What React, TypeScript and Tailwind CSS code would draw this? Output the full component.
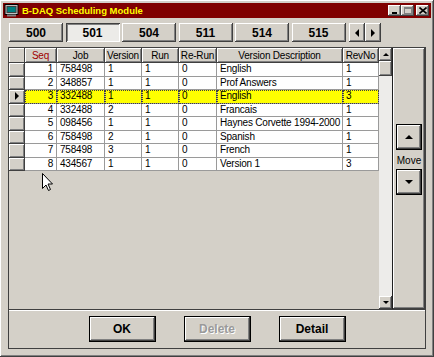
import React from 'react';

// Win9x-style 3D edges
const raised =
  'shadow-[inset_-1px_-1px_#404040,inset_1px_1px_#ffffff,inset_-2px_-2px_#808080,inset_2px_2px_#d4d0c8]';

const columns = [
  { key: 'seq', label: 'Seq', w: 'w-[32px]', align: 'text-right' },
  { key: 'job', label: 'Job', w: 'w-[48px]', align: 'text-left' },
  { key: 'ver', label: 'Version', w: 'w-[37px]', align: 'text-left' },
  { key: 'run', label: 'Run', w: 'w-[37px]', align: 'text-left' },
  { key: 'rerun', label: 'Re-Run', w: 'w-[38px]', align: 'text-left' },
  { key: 'desc', label: 'Version Description', w: 'w-[126px]', align: 'text-left' },
  { key: 'rev', label: 'RevNo', w: 'w-[36px]', align: 'text-left' },
];

const rows = [
  ['1', '758498', '1', '1', '0', 'English', '1'],
  ['2', '348857', '1', '1', '0', 'Prof Answers', '1'],
  ['3', '332488', '1', '1', '0', 'English', '3'],
  ['4', '332488', '2', '1', '0', 'Francais', '1'],
  ['5', '098456', '1', '1', '0', 'Haynes Corvette 1994-2000', '1'],
  ['6', '758498', '2', '1', '0', 'Spanish', '1'],
  ['7', '758498', '3', '1', '0', 'French', '1'],
  ['8', '434567', '1', '1', '0', 'Version 1', '3'],
];

const selectedRow = 2;

const tabs = ['500', '501', '504', '511', '514', '515'];

const Tri: React.FC<{ dir: 'up' | 'down' | 'left' | 'right'; size?: number; color?: string }> = ({
  dir,
  size = 4,
  color = '#000',
}) => {
  const s = size;
  const pts =
    dir === 'up'
      ? `0,${s} ${s},0 ${s * 2},${s}`
      : dir === 'down'
      ? `0,0 ${s * 2},0 ${s},${s}`
      : dir === 'left'
      ? `${s},0 ${s},${s * 2} 0,${s}`
      : `0,0 0,${s * 2} ${s},${s}`;
  const w = dir === 'up' || dir === 'down' ? s * 2 : s;
  const h = dir === 'up' || dir === 'down' ? s : s * 2;
  return (
    <svg width={w} height={h} viewBox={`0 0 ${w} ${h}`}>
      <polygon points={pts} fill={color} />
    </svg>
  );
};

const TitleButton: React.FC<{ children: React.ReactNode }> = ({ children }) => (
  <div className={`w-[13px] h-[11px] bg-[#d4d0c8] flex items-center justify-center ${raised}`}>{children}</div>
);

const DialogButton: React.FC<{ label: string; disabled?: boolean }> = ({ label, disabled }) => (
  <div className="w-[67px] h-[26px] border border-black">
    <div className={`w-full h-full flex items-center justify-center bg-[#d4d0c8] ${raised}`}>
      <span
        className={`font-bold text-[12px] ${
          disabled ? 'text-[#9a9a9a] [text-shadow:1px_1px_0_#ffffff]' : 'text-black'
        }`}
      >
        {label}
      </span>
    </div>
  </div>
);

export default function App() {
  return (
    <div
      className={`relative w-[434px] h-[357px] bg-[#d4d0c8] p-[3px] font-['Liberation_Sans',Arial,sans-serif] text-[10px] text-black ${raised}`}
    >
      {/* title bar */}
      <div className="h-[15px] bg-[#800000] flex items-center pl-[1px] pr-[2px]">
        <svg width="15" height="13" viewBox="0 0 15 13" className="mr-[3px]">
          <rect x="1" y="0.5" width="13" height="10" fill="#c0c0c0" stroke="#000" />
          <rect x="3" y="2.5" width="9" height="6" fill="#008080" stroke="#404040" />
          <rect x="3" y="10.5" width="9" height="2" fill="#808080" />
        </svg>
        <span className="text-[#ffff00] font-bold text-[9.5px] leading-none">B-DAQ Scheduling Module</span>
        <div className="ml-auto flex items-center">
          <TitleButton>
            <div className="w-[5px] h-[2px] bg-black mt-[4px]" />
          </TitleButton>
          <TitleButton>
            <div className="w-[8px] h-[7px] border border-[#808080] border-t-2" />
          </TitleButton>
          <div className="w-[2px]" />
          <TitleButton>
            <svg width="8" height="7" viewBox="0 0 8 7">
              <path d="M0.5 0.5 L7.5 6.5 M7.5 0.5 L0.5 6.5" stroke="#000" strokeWidth="1.6" />
            </svg>
          </TitleButton>
        </div>
      </div>

      <div className="px-[5px]">
        {/* tabs */}
        <div className="mt-[5px] ml-[1px] h-[19px] flex">
          {tabs.map((t, i) => (
            <div
              key={t}
              className={`w-[54px] h-[19px] mr-[2.5px] flex items-center justify-center font-bold text-[12px] ${
                i === 1
                  ? 'bg-[#ecebe8] shadow-[inset_1px_1px_#404040,inset_-1px_-1px_#ffffff,inset_2px_2px_#808080]'
                  : `bg-[#d4d0c8] ${raised}`
              }`}
            >
              {t}
            </div>
          ))}
          <div className={`ml-[0.5px] w-[16px] h-[19px] flex items-center justify-center bg-[#d4d0c8] ${raised}`}>
            <Tri dir="left" />
          </div>
          <div className={`w-[16px] h-[19px] flex items-center justify-center bg-[#d4d0c8] ${raised}`}>
            <Tri dir="right" />
          </div>
        </div>

        {/* main frame */}
        <div className="mt-[5px] w-[418px] h-[302px] border border-[#404040] flex flex-col">
          <div className="h-[262px] flex border-b border-[#404040]">
            {/* grid */}
            <div className="w-[370px] h-full bg-[#d4d0c8]">
              <div className="flex h-[15px]">
                <div className="w-[16px] h-full bg-[#d4d0c8] border-r border-b border-[#404040] shadow-[inset_1px_1px_#ffffff]" />
                {columns.map((c) => (
                  <div
                    key={c.key}
                    className={`${c.w} h-full flex items-center justify-center whitespace-nowrap overflow-hidden tracking-[-0.2px] bg-[#d4d0c8] border-r border-b border-[#404040] shadow-[inset_1px_1px_#ffffff,inset_-1px_-1px_#808080] ${
                      c.key === 'seq' ? 'text-[#a00000]' : 'text-black'
                    }`}
                  >
                    {c.label}
                  </div>
                ))}
              </div>
              {rows.map((r, ri) => {
                const sel = ri === selectedRow;
                return (
                  <div key={ri} className="flex h-[13.5px]">
                    <div className="w-[16px] h-full flex items-center justify-center bg-[#d4d0c8] border-r border-b border-[#404040] shadow-[inset_1px_1px_#ffffff,inset_-1px_-1px_#808080]">
                      {sel && <Tri dir="right" size={4} />}
                    </div>
                    {columns.map((c, ci) => (
                      <div
                        key={c.key}
                        className={`${c.w} h-full border-r border-b border-[#9a9a9a] px-[3px] leading-[12.5px] tracking-[-0.2px] whitespace-nowrap overflow-hidden ${
                          c.align
                        } ${sel ? 'bg-[#ffff00] outline-1 outline-dotted outline-[#404040] -outline-offset-1' : 'bg-white'}`}
                      >
                        {r[ci]}
                      </div>
                    ))}
                  </div>
                );
              })}
            </div>

            {/* vertical scrollbar */}
            <div className="w-[13px] h-full flex flex-col bg-[#edecea]">
              <div className={`w-[13px] h-[13px] flex items-center justify-center bg-[#d4d0c8] ${raised}`}>
                <Tri dir="up" size={3} />
              </div>
              <div className={`w-[13px] h-[15px] bg-[#d4d0c8] ${raised}`} />
              <div className="flex-1" />
              <div className={`w-[13px] h-[13px] flex items-center justify-center bg-[#d4d0c8] ${raised}`}>
                <Tri dir="down" size={3} />
              </div>
            </div>

            {/* move panel */}
            <div className={`w-[33px] h-full border-l border-[#202020] bg-[#d4d0c8] flex flex-col items-center pt-[76px] ${raised}`}>
              <div className="w-[26px] h-[26px] border border-black">
                <div className={`w-full h-full flex items-center justify-center bg-[#d4d0c8] ${raised}`}>
                  <Tri dir="up" size={4} />
                </div>
              </div>
              <div className="mt-[4px] h-[14px] leading-[14px] text-[10px]">Move</div>
              <div className="mt-[1px] w-[26px] h-[26px] border border-black">
                <div className={`w-full h-full flex items-center justify-center bg-[#d4d0c8] ${raised}`}>
                  <Tri dir="down" size={4} />
                </div>
              </div>
            </div>
          </div>

          {/* button bar */}
          <div className="flex-1 border-t border-white flex justify-center gap-[28px] pt-[5px]">
            <DialogButton label="OK" />
            <DialogButton label="Delete" disabled />
            <DialogButton label="Detail" />
          </div>
        </div>
      </div>

      {/* mouse pointer */}
      <svg className="absolute left-[42px] top-[173px]" width="12" height="19" viewBox="0 0 12 19">
        <path
          d="M0.5 0.5 L0.5 15.5 L4 12 L6.5 17.5 L8.5 16.5 L6 11 L10.5 11 Z"
          fill="#ffffff"
          stroke="#000000"
          strokeWidth="1"
          strokeLinejoin="miter"
        />
      </svg>
    </div>
  );
}
